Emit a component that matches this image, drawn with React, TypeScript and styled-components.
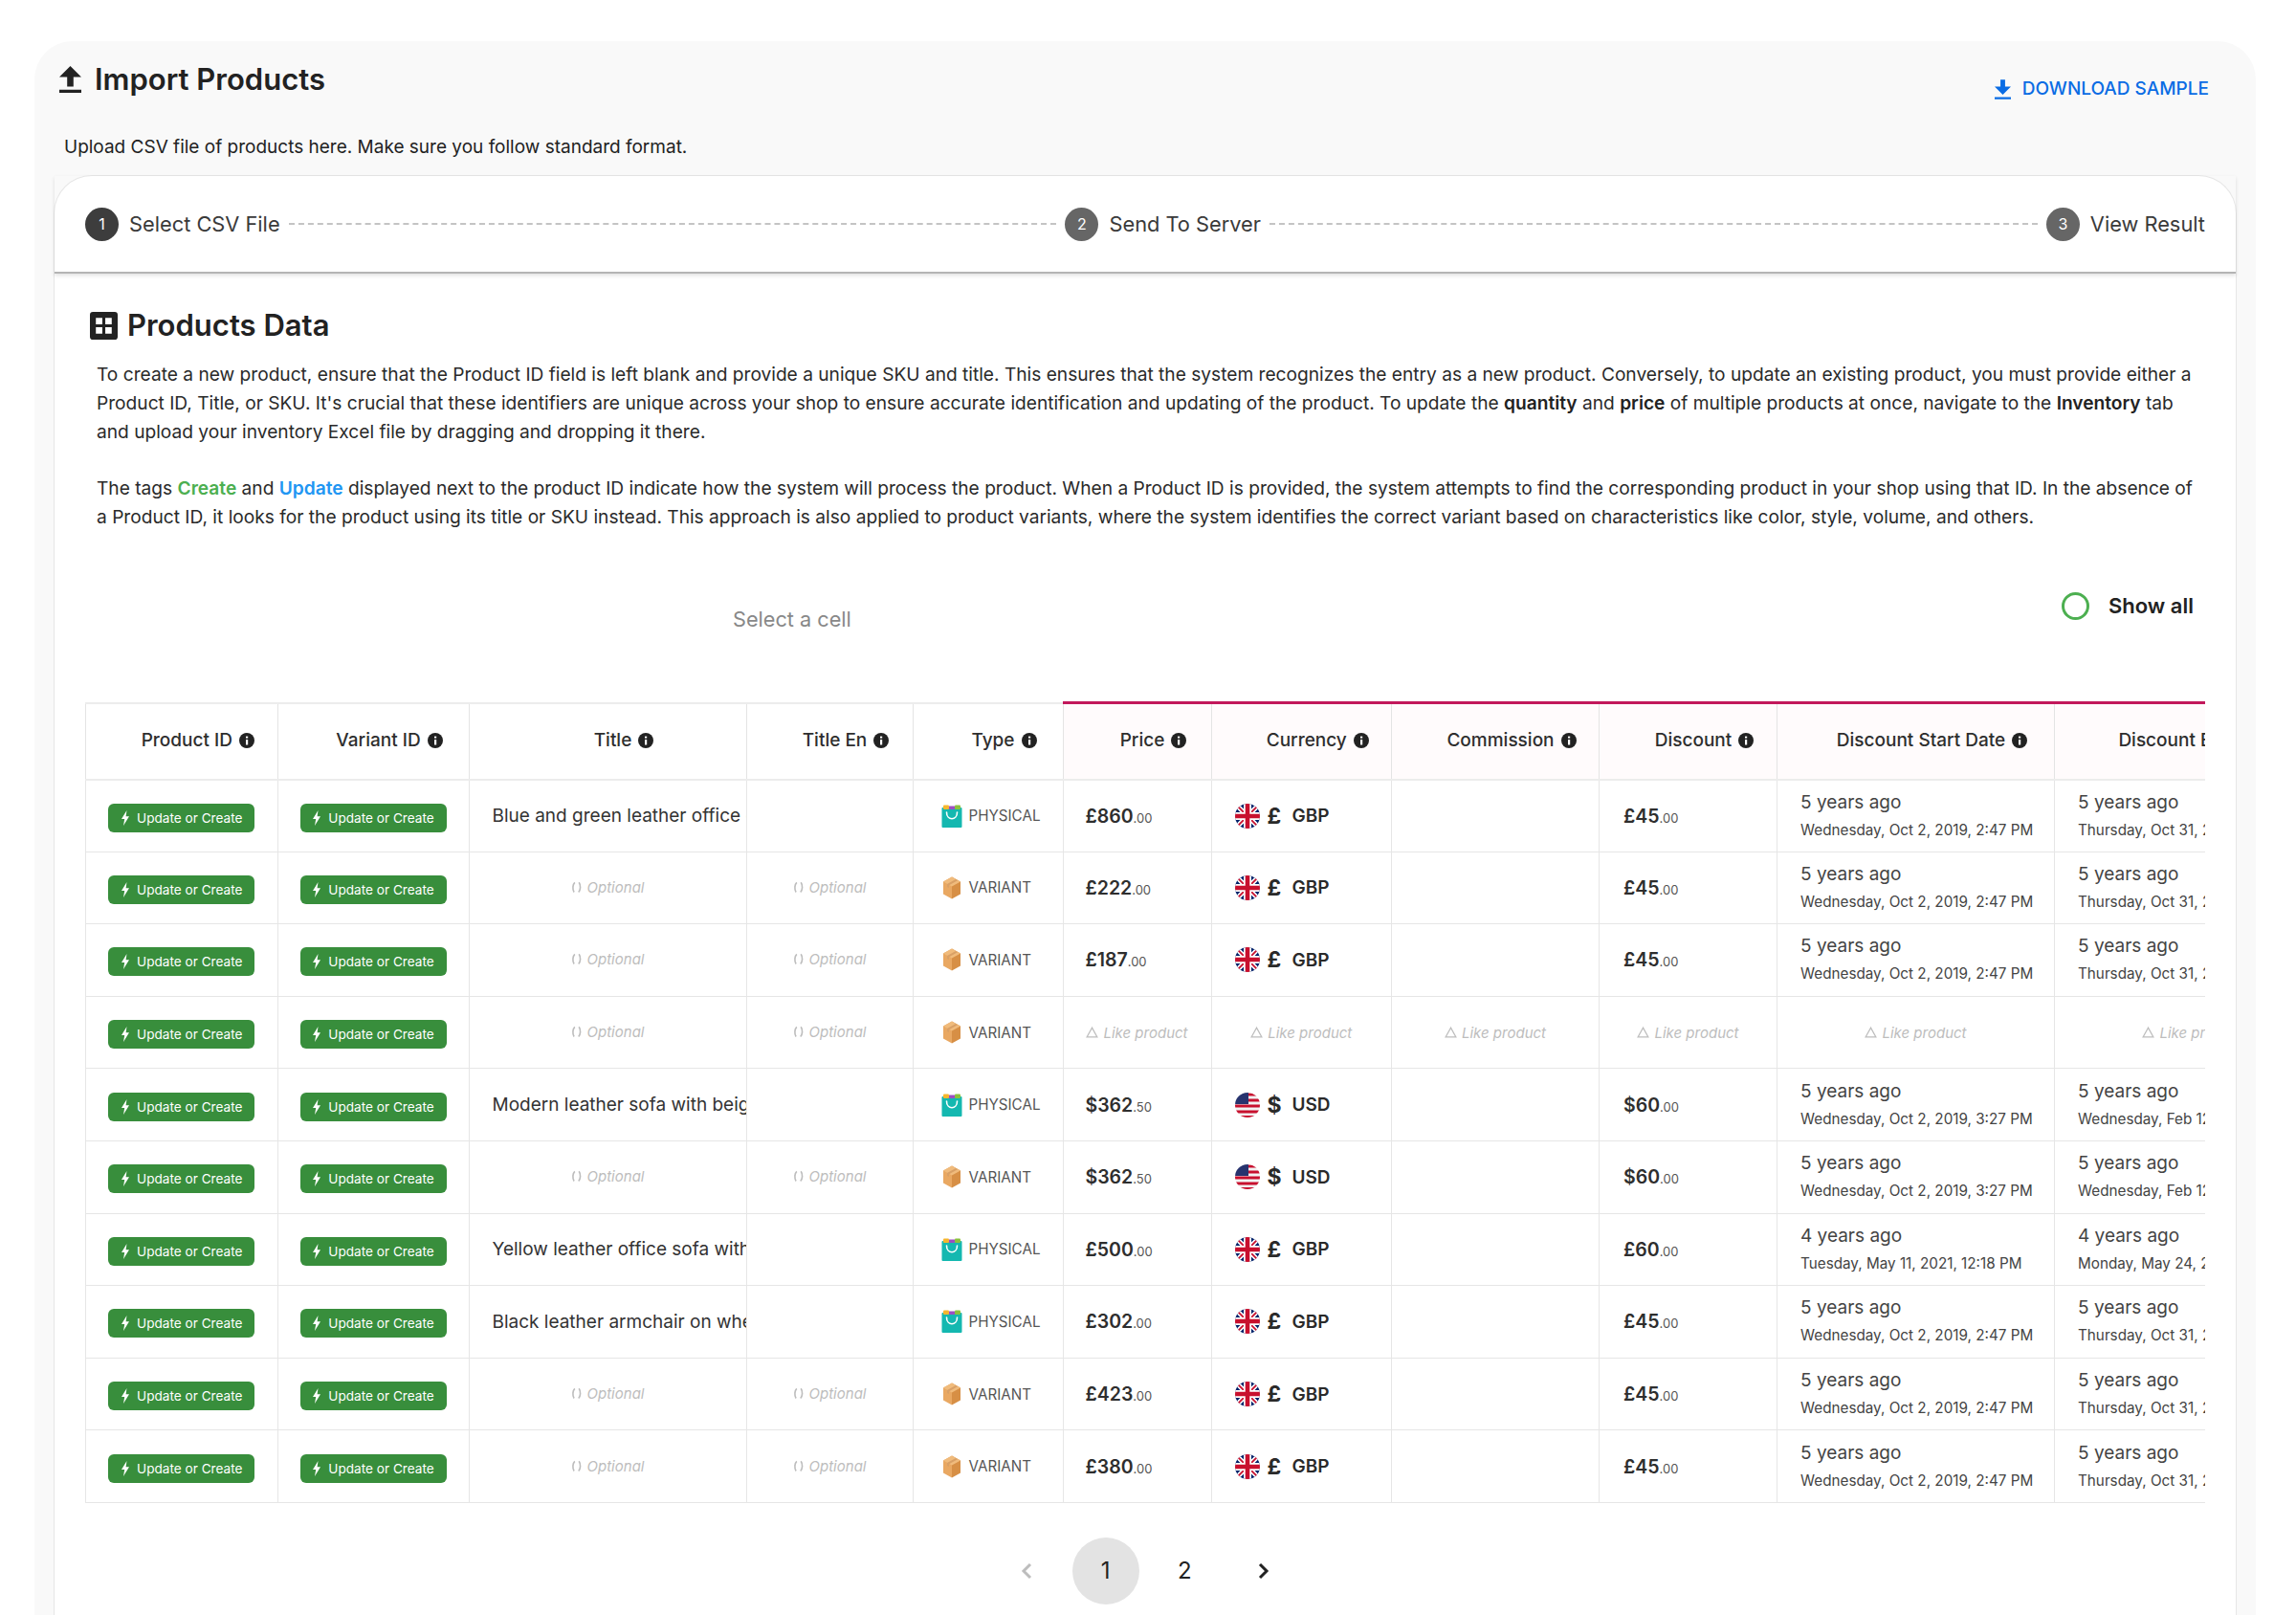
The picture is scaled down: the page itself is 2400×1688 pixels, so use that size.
import React from "react";
import styled, { createGlobalStyle } from "styled-components";

const GlobalStyle = createGlobalStyle`
  html, body {
    margin: 0;
    width: 2400px;
    height: 1688px;
    overflow: hidden;
    background: #fff;
  }
  body {
    font-family: Inter, "Noto Sans", sans-serif;
    color: #222;
  }
`;

const Page = styled.div`
  padding: 43px 42px 0 36px;
  height: 1688px;
  box-sizing: border-box;
  overflow: hidden;
`;

const OuterCard = styled.section`
  background: #f9f9f9;
  border-radius: 40px 40px 0 0;
  padding: 0 20px;
  min-height: 1800px;
`;

const Header = styled.header`
  display: flex;
  justify-content: space-between;
  align-items: flex-start;
  padding: 20px 29px 0 6px;
`;

const TitleRow = styled.div`
  display: flex;
  align-items: center;
  gap: 14px;
`;

const PageTitle = styled.h1`
  margin: 0;
  font-size: 31px;
  line-height: 40px;
  font-weight: 600;
  color: #222;
`;

const DownloadLink = styled.a`
  display: flex;
  align-items: center;
  gap: 12px;
  margin-top: 17px;
  font-size: 19px;
  line-height: 26px;
  font-weight: 500;
  color: #0a6ce4;
`;

const Subtitle = styled.p`
  margin: 33px 0 14px 11px;
  font-size: 19px;
  line-height: 30px;
  color: #222;
`;

const InnerCard = styled.div`
  background: #fff;
  border: 1px solid #e6e6e6;
  border-bottom: none;
  border-radius: 40px 40px 0 0;
  min-height: 1600px;
`;

const Stepper = styled.div`
  position: relative;
  display: flex;
  align-items: center;
  height: 100px;
  padding: 0 32px;
  border-bottom: 2px solid #b4b4b4;
  box-shadow: 0 2px 4px rgba(0, 0, 0, 0.12);
  box-sizing: content-box;
`;

const StepDot = styled.span<{ $active?: boolean }>`
  flex: none;
  width: 35px;
  height: 35px;
  border-radius: 50%;
  display: flex;
  align-items: center;
  justify-content: center;
  font-size: 16px;
  color: #fff;
  background: ${({ $active }) => ($active ? "#3d3d3d" : "#666")};
`;

const StepLabel = styled.span`
  flex: none;
  margin-left: 11px;
  font-size: 21.8px;
  color: #3a3a3a;
`;

const StepLine = styled.span`
  flex: 1;
  margin: 0 9px;
  border-top: 2px dashed #c4c4c4;
`;

const Content = styled.div`
  padding: 34px 32px 0 32px;
`;

const SectionTitle = styled.div`
  display: flex;
  align-items: center;
  gap: 10px;
  margin-left: 5px;
`;

const SectionHeading = styled.h2`
  margin: 0;
  font-size: 31px;
  line-height: 40px;
  font-weight: 600;
  color: #222;
`;

const Paragraph = styled.p`
  margin: 16px 6px 29px 12px;
  font-size: 19.15px;
  line-height: 30px;
  color: #2a2a2a;
`;

const SecondParagraph = styled(Paragraph)`
  margin-top: 0;
  margin-bottom: 0;
`;

const Emphasis = styled.b`
  font-weight: 600;
  color: #222;
`;

const Tag = styled.b<{ $color: string }>`
  font-weight: 600;
  color: ${({ $color }) => $color};
`;

const Toolbar = styled.div`
  display: flex;
  justify-content: space-between;
  align-items: flex-start;
  height: 178px;
`;

const SelectCell = styled.div`
  margin: 77px 0 0 677px;
  font-size: 21.7px;
  line-height: 30px;
  color: #888;
`;

const ShowAll = styled.div`
  display: flex;
  align-items: center;
  gap: 20px;
  margin: 64px 12px 0 0;
  font-size: 22px;
  line-height: 29px;
  font-weight: 600;
  color: #222;
`;

const Radio = styled.span`
  width: 29px;
  height: 29px;
  box-sizing: border-box;
  border: 3px solid #4caf50;
  border-radius: 50%;
`;

const TableScroller = styled.div`
  width: 2216px;
  overflow: hidden;
`;

const DataTable = styled.table`
  table-layout: fixed;
  width: 2348px;
  border-collapse: collapse;
`;

const HeadCell = styled.th<{ $price?: boolean }>`
  height: 80px;
  padding: 0 0 2px 34px;
  box-sizing: border-box;
  border: 2px solid #ececec;
  border-left: 1px solid #e4e4e4;
  border-right: 1px solid #e4e4e4;
  border-top: ${({ $price }) => ($price ? "3px solid #c2185b" : "2px solid #ececec")};
  background: ${({ $price }) => ($price ? "#fffbfc" : "#fff")};
  font-size: 19px;
  font-weight: 500;
  color: #2e2e2e;
  white-space: nowrap;
  overflow: hidden;
`;

const HeadInner = styled.span`
  display: inline-flex;
  align-items: center;
  gap: 7px;
`;

const BodyCell = styled.td<{ $center?: boolean; $pad?: number }>`
  height: 75.6px;
  padding: 0 0 0 ${({ $pad }) => $pad ?? 0}px;
  box-sizing: border-box;
  border: 1px solid #e6e6e6;
  text-align: ${({ $center }) => ($center ? "center" : "left")};
  white-space: nowrap;
  overflow: hidden;
`;

const UpdateBadge = styled.span`
  display: inline-flex;
  align-items: center;
  justify-content: center;
  gap: 7px;
  width: 153px;
  height: 30px;
  margin-top: 4px;
  border-radius: 6px;
  background: #388e3c;
  color: #fff;
  font-size: 13.6px;
  vertical-align: middle;
`;

const TitleText = styled.span`
  font-size: 19px;
  color: #333;
`;

const Hint = styled.span`
  display: inline-flex;
  align-items: center;
  gap: 5px;
  font-size: 15px;
  font-style: italic;
  color: #bdbdbd;
`;

const TypeCell = styled.span`
  display: flex;
  align-items: center;
  gap: 7px;
  font-size: 15.2px;
  color: #555;
`;

const IconBox = styled.span`
  display: flex;
  justify-content: center;
  width: 22px;
`;

const Money = styled.span`
  font-size: 19.5px;
  font-weight: 600;
  color: #2e2e2e;
`;

const Cents = styled.span`
  font-size: 13px;
  font-weight: 400;
  color: #555;
`;

const CurrencyBox = styled.span`
  display: flex;
  align-items: center;
  font-size: 19px;
  font-weight: 600;
  color: #2a2a2a;
`;

const FlagIcon = styled.svg`
  width: 26px;
  height: 26px;
  border-radius: 50%;
  margin-right: 8px;
`;

const CurrencySign = styled.span`
  width: 26px;
  font-size: 23px;
  font-weight: 700;
`;

const DateBox = styled.div`
  display: flex;
  flex-direction: column;
  gap: 6px;
`;

const DateAgo = styled.span`
  font-size: 19px;
  line-height: 24px;
  color: #444;
`;

const DateFull = styled.span`
  font-size: 15.25px;
  line-height: 22px;
  color: #444;
`;

const Pagination = styled.nav`
  display: flex;
  justify-content: center;
  gap: 12.6px;
  margin-top: 36px;
`;

const PageItem = styled.span<{ $current?: boolean }>`
  width: 70px;
  height: 70px;
  border-radius: 50%;
  display: flex;
  align-items: center;
  justify-content: center;
  font-size: 24px;
  color: #222;
  background: ${({ $current }) => ($current ? "#e3e3e3" : "transparent")};
`;

const UploadIcon = () => (
  <svg width="23" height="28" viewBox="5 3 14 17" fill="#222">
    <path d="M10 16h4v-6h5l-7-7-7 7h5zM5 18h14v2H5z" />
  </svg>
);

const DownloadIcon = () => (
  <svg width="17" height="23" viewBox="5 3 14 17" fill="#0a6ce4">
    <path d="M10 3h4v6h5l-7 7-7-7h5zM5 18h14v2H5z" />
  </svg>
);

const GridIcon = () => (
  <svg width="29" height="29" viewBox="0 0 28 28">
    <path
      fill="#222"
      fillRule="evenodd"
      d="M3 0h22a3 3 0 0 1 3 3v22a3 3 0 0 1-3 3H3a3 3 0 0 1-3-3V3a3 3 0 0 1 3-3zM6 6v6.500h6.500V6zM15.500 6v6.500H22V6zM6 15.500V22h6.500v-6.500zM15.500 15.500V22H22v-6.500z"
    />
  </svg>
);

const InfoIcon = () => (
  <svg width="16" height="16" viewBox="0 0 16 16">
    <circle cx="8" cy="8" r="8" fill="#222" />
    <rect x="7" y="7" width="2.2" height="5.5" fill="#fff" />
    <rect x="7" y="3.6" width="2.2" height="2" fill="#fff" />
  </svg>
);

const BoltIcon = () => (
  <svg width="10" height="16" viewBox="0 0 10 16" fill="#fff">
    <path d="M6.500 0L1 9h3.200L3 16l6-9.800H5.600z" />
  </svg>
);

const OptionalIcon = () => (
  <svg width="12" height="13" viewBox="0 0 11 12" fill="none" stroke="#bdbdbd" strokeWidth="1.5">
    <path d="M3.500 1.200C1.500 3 1 7.500 2.800 10.600M7.500 1.200c2 2.800 1.600 7.300-.4 9.400" />
  </svg>
);

const TriangleIcon = () => (
  <svg width="13" height="12" viewBox="0 0 13 12" fill="none" stroke="#bdbdbd" strokeWidth="1.3">
    <path d="M6.500 1.200L1.200 10.800h10.600z" />
  </svg>
);

const BagIcon = () => (
  <svg width="22" height="24" viewBox="0 0 22 24">
    <rect x="0.500" y="3" width="21" height="21" rx="1" fill="#14b8b0" />
    <rect x="2" y="0.500" width="6" height="4.500" rx="1" fill="#f6b62e" />
    <rect x="8" y="1.500" width="6" height="3.500" fill="#9c4fc2" />
    <rect x="14" y="0.500" width="6" height="4.500" rx="1" fill="#8bc23c" />
    <path d="M5.500 8c0 9 11 9 11 0" fill="none" stroke="#fff" strokeWidth="1.6" strokeLinecap="round" />
  </svg>
);

const BoxIcon = () => (
  <svg width="20" height="24" viewBox="0 0 20 24">
    <path d="M10 0.500l9 5v13l-9 5z" fill="#d78f45" />
    <path d="M10 0.500l-9 5v13l9 5z" fill="#e9a862" />
    <path d="M10 0.500l9 5-9 5-9-5z" fill="#f0bb7c" />
    <path d="M14 3l-9 5v3l2 1V9.200l9-5z" fill="#d9a066" />
  </svg>
);

const UkFlag = () => (
  <FlagIcon viewBox="0 0 26 26">
    <rect width="26" height="26" fill="#012169" />
    <path d="M0 0l26 26M26 0L0 26" stroke="#fff" strokeWidth="5" />
    <path d="M0 0l26 26M26 0L0 26" stroke="#c8102e" strokeWidth="1.8" />
    <path d="M13 0v26M0 13h26" stroke="#fff" strokeWidth="8" />
    <path d="M13 0v26M0 13h26" stroke="#c8102e" strokeWidth="4.6" />
  </FlagIcon>
);

const UsFlag = () => (
  <FlagIcon viewBox="0 0 26 26">
    <rect width="26" height="26" fill="#f2f2f2" />
    <path d="M0 14h26M0 20h26M0 25.500h26M14 2h12M14 8h12" stroke="#c8102e" strokeWidth="3" />
    <rect width="14" height="12" fill="#27336e" />
  </FlagIcon>
);

const ChevronIcon = ({ left, color }: { left?: boolean; color: string }) => (
  <svg width="14" height="18" viewBox="0 0 14 18" fill="none" stroke={color} strokeWidth="3">
    <path d={left ? "M11 2L4 9l7 7" : "M3 2l7 7-7 7"} />
  </svg>
);

const Hinted = ({ kind }: { kind: "optional" | "like" }) =>
  kind === "optional" ? (
    <Hint>
      <OptionalIcon />
      Optional
    </Hint>
  ) : (
    <Hint>
      <TriangleIcon />
      Like product
    </Hint>
  );

const columns: { label: string; width: number; price?: boolean }[] = [
  { label: "Product ID", width: 200.5 },
  { label: "Variant ID", width: 200 },
  { label: "Title", width: 290 },
  { label: "Title En", width: 174 },
  { label: "Type", width: 157 },
  { label: "Price", width: 155, price: true },
  { label: "Currency", width: 188.5, price: true },
  { label: "Commission", width: 217, price: true },
  { label: "Discount", width: 186, price: true },
  { label: "Discount Start Date", width: 290, price: true },
  { label: "Discount End Date", width: 290, price: true },
];

interface Row {
  title?: string;
  price?: [string, string];
  currency?: "GBP" | "USD";
  discount?: string;
  start?: [string, string];
  end?: [string, string];
}

const gbStart: [string, string] = ["5 years ago", "Wednesday, Oct 2, 2019, 2:47 PM"];
const gbEnd: [string, string] = ["5 years ago", "Thursday, Oct 31, 2019, 2:47 PM"];
const usStart: [string, string] = ["5 years ago", "Wednesday, Oct 2, 2019, 3:27 PM"];
const usEnd: [string, string] = ["5 years ago", "Wednesday, Feb 12, 2020, 3:27 PM"];

const rows: Row[] = [
  { title: "Blue and green leather office chair", price: ["£860", ".00"], currency: "GBP", discount: "£45", start: gbStart, end: gbEnd },
  { price: ["£222", ".00"], currency: "GBP", discount: "£45", start: gbStart, end: gbEnd },
  { price: ["£187", ".00"], currency: "GBP", discount: "£45", start: gbStart, end: gbEnd },
  {},
  { title: "Modern leather sofa with beige cushions", price: ["$362", ".50"], currency: "USD", discount: "$60", start: usStart, end: usEnd },
  { price: ["$362", ".50"], currency: "USD", discount: "$60", start: usStart, end: usEnd },
  {
    title: "Yellow leather office sofa with wood",
    price: ["£500", ".00"],
    currency: "GBP",
    discount: "£60",
    start: ["4 years ago", "Tuesday, May 11, 2021, 12:18 PM"],
    end: ["4 years ago", "Monday, May 24, 2021, 12:18 PM"],
  },
  { title: "Black leather armchair on wheels", price: ["£302", ".00"], currency: "GBP", discount: "£45", start: gbStart, end: gbEnd },
  { price: ["£423", ".00"], currency: "GBP", discount: "£45", start: gbStart, end: gbEnd },
  { price: ["£380", ".00"], currency: "GBP", discount: "£45", start: gbStart, end: gbEnd },
];

const PriceValue = ({ value }: { value: [string, string] }) => (
  <>
    <Money>{value[0]}</Money>
    <Cents>{value[1]}</Cents>
  </>
);

const DiscountValue = ({ value }: { value: string }) => (
  <>
    <Money>{value}</Money>
    <Cents>.00</Cents>
  </>
);

const DateValue = ({ value }: { value: [string, string] }) => (
  <DateBox>
    <DateAgo>{value[0]}</DateAgo>
    <DateFull>{value[1]}</DateFull>
  </DateBox>
);

const Badge = () => (
  <UpdateBadge>
    <BoltIcon />
    Update or Create
  </UpdateBadge>
);

function ProductRow({ row }: { row: Row }) {
  const isLike = !row.price;
  return (
    <tr>
      <BodyCell $center>
        <Badge />
      </BodyCell>
      <BodyCell $center>
        <Badge />
      </BodyCell>
      {row.title ? (
        <BodyCell $pad={24}>
          <TitleText>{row.title}</TitleText>
        </BodyCell>
      ) : (
        <BodyCell $center>
          <Hinted kind="optional" />
        </BodyCell>
      )}
      {row.title ? (
        <BodyCell />
      ) : (
        <BodyCell $center>
          <Hinted kind="optional" />
        </BodyCell>
      )}
      <BodyCell $pad={29}>
        <TypeCell>
          <IconBox>{row.title ? <BagIcon /> : <BoxIcon />}</IconBox>
          {row.title ? "PHYSICAL" : "VARIANT"}
        </TypeCell>
      </BodyCell>
      {isLike ? (
        <>
          <BodyCell $center>
            <Hinted kind="like" />
          </BodyCell>
          <BodyCell $center>
            <Hinted kind="like" />
          </BodyCell>
          <BodyCell $center>
            <Hinted kind="like" />
          </BodyCell>
          <BodyCell $center>
            <Hinted kind="like" />
          </BodyCell>
          <BodyCell $center>
            <Hinted kind="like" />
          </BodyCell>
          <BodyCell $center>
            <Hinted kind="like" />
          </BodyCell>
        </>
      ) : (
        <>
          <BodyCell $pad={23}>
            <PriceValue value={row.price!} />
          </BodyCell>
          <BodyCell $pad={24}>
            <CurrencyBox>
              {row.currency === "USD" ? <UsFlag /> : <UkFlag />}
              <CurrencySign>{row.currency === "USD" ? "$" : "£"}</CurrencySign>
              {row.currency}
            </CurrencyBox>
          </BodyCell>
          <BodyCell />
          <BodyCell $pad={25}>
            <DiscountValue value={row.discount!} />
          </BodyCell>
          <BodyCell $pad={24}>
            <DateValue value={row.start!} />
          </BodyCell>
          <BodyCell $pad={24}>
            <DateValue value={row.end!} />
          </BodyCell>
        </>
      )}
    </tr>
  );
}

function Step({ index, label, active }: { index: number; label: string; active?: boolean }) {
  return (
    <>
      <StepDot $active={active}>{index}</StepDot>
      <StepLabel>{label}</StepLabel>
    </>
  );
}

export default function App() {
  return (
    <>
      <GlobalStyle />
      <Page>
        <OuterCard>
          <Header>
            <TitleRow>
              <UploadIcon />
              <PageTitle>Import Products</PageTitle>
            </TitleRow>
            <DownloadLink>
              <DownloadIcon />
              DOWNLOAD SAMPLE
            </DownloadLink>
          </Header>
          <Subtitle>Upload CSV file of products here. Make sure you follow standard format.</Subtitle>
          <InnerCard>
            <Stepper>
              <Step index={1} label="Select CSV File" active />
              <StepLine />
              <Step index={2} label="Send To Server" />
              <StepLine />
              <Step index={3} label="View Result" />
            </Stepper>
            <Content>
              <SectionTitle>
                <GridIcon />
                <SectionHeading>Products Data</SectionHeading>
              </SectionTitle>
              <Paragraph>
                To create a new product, ensure that the Product ID field is left blank and provide a unique SKU and title. This ensures that the system recognizes the entry as a new product. Conversely, to update an existing product, you must provide either a Product ID, Title, or SKU. It's crucial that these identifiers are unique across your shop to ensure accurate identification and updating of the product. To update the <Emphasis>quantity</Emphasis> and <Emphasis>price</Emphasis> of multiple products at once, navigate to the <Emphasis>Inventory</Emphasis> tab and upload your inventory Excel file by dragging and dropping it there.
              </Paragraph>
              <SecondParagraph>
                The tags <Tag $color="#4caf50">Create</Tag> and <Tag $color="#2196f3">Update</Tag> displayed next to the product ID indicate how the system will process the product. When a Product ID is provided, the system attempts to find the corresponding product in your shop using that ID. In the absence of a Product ID, it looks for the product using its title or SKU instead. This approach is also applied to product variants, where the system identifies the correct variant based on characteristics like color, style, volume, and others.
              </SecondParagraph>
              <Toolbar>
                <SelectCell>Select a cell</SelectCell>
                <ShowAll>
                  <Radio />
                  Show all
                </ShowAll>
              </Toolbar>
              <TableScroller>
                <DataTable>
                  <colgroup>
                    {columns.map((c) => (
                      <col key={c.label} width={c.width} />
                    ))}
                  </colgroup>
                  <thead>
                    <tr>
                      {columns.map((c) => (
                        <HeadCell key={c.label} $price={c.price}>
                          <HeadInner>
                            {c.label}
                            <InfoIcon />
                          </HeadInner>
                        </HeadCell>
                      ))}
                    </tr>
                  </thead>
                  <tbody>
                    {rows.map((row, i) => (
                      <ProductRow key={i} row={row} />
                    ))}
                  </tbody>
                </DataTable>
              </TableScroller>
              <Pagination>
                <PageItem>
                  <ChevronIcon left color="#bdbdbd" />
                </PageItem>
                <PageItem $current>1</PageItem>
                <PageItem>2</PageItem>
                <PageItem>
                  <ChevronIcon color="#222" />
                </PageItem>
              </Pagination>
            </Content>
          </InnerCard>
        </OuterCard>
      </Page>
    </>
  );
}
